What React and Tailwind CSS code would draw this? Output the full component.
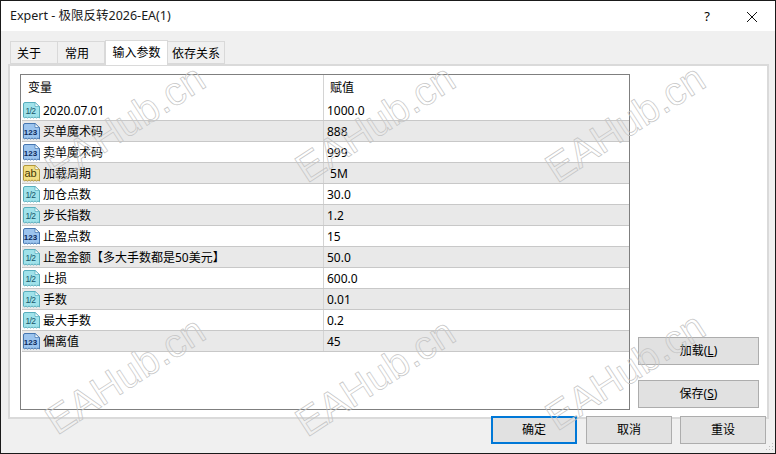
const rows = [
  ['half', '2020.07.01', '1000.0'],
  ['int', '买单魔术码', '888'],
  ['int', '卖单魔术码', '999'],
  ['text', '加载周期', ' 5M'],
  ['half', '加仓点数', '30.0'],
  ['half', '步长指数', '1.2'],
  ['int', '止盈点数', '15'],
  ['half', '止盈金额【多大手数都是50美元】', '50.0'],
  ['half', '止损', '600.0'],
  ['half', '手数', '0.01'],
  ['half', '最大手数', '0.2'],
  ['int', '偏离值', '45'],
];

const iconStyles = {
  half: { fill: '#a0e2ea', stroke: '#58aebd', text: '#17586a', label: '1/2' },
  int: { fill: '#9cc4ee', stroke: '#4676b0', text: '#0c2a5c', label: '123' },
  text: { fill: '#f2de85', stroke: '#b2973a', text: '#453806', label: 'ab' },
};

const TypeIcon = ({ type }) => {
  const s = iconStyles[type];
  return (
    <svg width="17" height="17" viewBox="0 0 17 17" className="shrink-0">
      <path
        d="M0.500 2 Q0.500 0.500 2 0.500 H12 L16.500 4.500 V16 L15 15 L13.500 16 L12 15 L10.500 16 L9 15 L7.500 16 L6 15 L4.500 16 L3 15 L1.500 16 L0.500 15 Z"
        fill={s.fill}
        stroke={s.stroke}
        strokeWidth="1"
      />
      <path d="M12 0.500 V4.500 H16.500 Z" fill="#eef8fb" stroke={s.stroke} strokeWidth="0.7" />
      <text
        x="7.500"
        y="11.500"
        textAnchor="middle"
        fontFamily="Liberation Sans, sans-serif"
        fontWeight={type === 'int' ? 700 : 400}
        fontSize={type === 'int' ? 8 : type === 'text' ? 11 : 8.500}
        letterSpacing={type === 'half' ? -0.6 : 0}
        fill={s.text}
      >
        {s.label}
      </text>
    </svg>
  );
};

const Tab = ({ label, active, w, pad = '' }) => (
  <div
    className={
      active
        ? `${w} h-[25px] -mb-px relative z-10 bg-white border border-b-0 border-[#d9d9d9] flex items-center justify-center`
        : `${w} ${pad} h-[23px] bg-[#f0f0f0] border border-l-0 first:border-l border-[#d9d9d9] flex items-center justify-center pt-[3px]`
    }
  >
    {label}
  </div>
);

const Button = ({ children, primary, w = 'w-[86px]', h = 'h-[28px]' }) => (
  <button
    className={
      primary
        ? `${w} ${h} bg-[#e1e1e1] border-2 border-[#0078d7] text-black`
        : `${w} ${h} bg-[#e1e1e1] border border-[#adadad] text-black`
    }
  >
    {children}
  </button>
);

const Watermark = ({ x, y }) => (
  <div
    className="absolute pointer-events-none -translate-x-1/2 -translate-y-1/2 -rotate-[33deg] text-[40px] leading-none text-transparent whitespace-nowrap [font-family:'Liberation_Sans',sans-serif] [-webkit-text-stroke:0.7px_#c4c4c4]"
    style={{ left: x, top: y }}
  >
    EAHub.cn
  </div>
);

const marks = [
  [124, 122],
  [374, 122],
  [624, 122],
  [124, 374],
  [374, 376],
  [624, 370],
];

export default function App() {
  return (
    <div className="relative w-[776px] h-[454px] overflow-hidden flex flex-col bg-[#f0f0f0] border border-[#1a1a1a] text-[12px] text-black [font-family:'Noto_Sans','Noto_Sans_CJK_SC',sans-serif]">
      <div className="h-[30px] shrink-0 bg-white flex items-center pl-[9px] pr-[13px] pt-px text-[12.500px]">
        <span className="text-[#1a1a1a]">Expert - 极限反转2026-EA(1)</span>
        <span className="ml-auto mr-[36px] text-[13px]">?</span>
        <svg width="12" height="12" viewBox="0 0 12 12" className="mr-[4px]">
          <path d="M1 1 L11 11 M11 1 L1 11" stroke="#111" strokeWidth="1" fill="none" />
        </svg>
      </div>

      <div className="flex items-end pl-[9px] h-[33px] shrink-0">
        <Tab label="关于" w="w-[48px]" pad="pr-[10px]" />
        <Tab label="常用" w="w-[47px]" pad="pr-[8px]" />
        <Tab label="输入参数" w="w-[63px]" active />
        <Tab label="依存关系" w="w-[57px]" />
      </div>

      <div className="mx-[7px] w-[761px] h-[355px] shrink-0 bg-white border-2 border-[#dadada] flex pt-[8px] pl-[10px] pr-[8px] pb-[7px]">
        <div className="w-[610px] h-full border border-[#7f7f7f] shrink-0 pl-px">
          <div className="flex h-[25px] items-center">
            <div className="w-[301px] pl-[6px] pt-px">变量</div>
            <div className="pl-[6px] border-l border-[#d4d4d4] h-full flex items-center">赋值</div>
          </div>
          {rows.map(([type, name, value], i) => (
            <div
              key={name}
              className={`flex h-[21px] items-center border-b border-[#c8c8c8] ${i % 2 === 1 ? 'bg-[#e9e9e9]' : 'bg-white'}`}
            >
              <div className="w-[301px] flex items-center gap-[3px] pl-[1px] pt-px">
                <TypeIcon type={type} />
                <span className="whitespace-nowrap">{name}</span>
              </div>
              <div className="h-full pl-[3px] pt-px border-l border-[#d4d4d4] flex items-center whitespace-pre">{value}</div>
            </div>
          ))}
        </div>
        <div className="flex-1 flex flex-col items-end justify-end gap-[15px] pb-[2px]">
          <Button w="w-[121px]" h="h-[28px]">加载(<u>L</u>)</Button>
          <Button w="w-[121px]" h="h-[28px]">保存(<u>S</u>)</Button>
        </div>
      </div>

      <div className="relative -mt-[3px] flex justify-end gap-[8px] pr-[9px]">
        <div className="mr-px"><Button primary>确定</Button></div>
        <Button>取消</Button>
        <Button>重设</Button>
      </div>

      {marks.map(([x, y]) => (
        <Watermark key={`${x}-${y}`} x={x} y={y} />
      ))}

      <svg width="10" height="10" viewBox="0 0 10 10" className="absolute right-px bottom-px">
        <path d="M8 1h1v1H8zM5 4h1v1H5zM8 4h1v1H8zM2 7h1v1H2zM5 7h1v1H5zM8 7h1v1H8z" fill="#bdbdbd" />
      </svg>
    </div>
  );
}
